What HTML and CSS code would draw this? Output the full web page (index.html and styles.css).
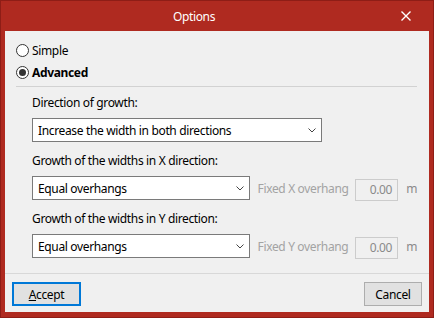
FILE: index.html
```html
<!DOCTYPE html>
<html lang="en">
<head>
  <meta charset="UTF-8" />
  <title>Options</title>
  <link rel="stylesheet" href="styles.css">
</head>
<body>

  <div class="window">
    <div class="titlebar">
      <span class="title">Options</span>
      <span class="close">
        <svg width="10" height="10" viewBox="0 0 10 10"><path d="M0.5 0.5 L9.5 9.5 M9.5 0.5 L0.5 9.5" stroke="#fff" stroke-width="1.4" fill="none"/></svg>
      </span>
    </div>

    <div class="content">
      <div class="body">
        <div class="radio"><span class="radio-dot"></span>Simple</div>
        <div class="radio checked"><span class="radio-dot"></span><b>Advanced</b></div>
        <div class="divider"></div>

        <div class="group">
          <div class="field-label">Direction of growth:</div>
          <div class="select wide">
            <span>Increase the width in both directions</span>
            <svg width="8" height="5" viewBox="0 0 8 5"><path d="M0.5 0.5 L4 4 L7.5 0.5" stroke="#444" fill="none"/></svg>
          </div>

          <div class="field-label">Growth of the widths in X direction:</div>
          <div class="row">
            <div class="select">
              <span>Equal overhangs</span>
              <svg width="8" height="5" viewBox="0 0 8 5"><path d="M0.5 0.5 L4 4 L7.5 0.5" stroke="#444" fill="none"/></svg>
            </div>
            <span class="muted">Fixed X overhang</span>
            <span class="number">0.00</span>
            <span class="unit">m</span>
          </div>

          <div class="field-label">Growth of the widths in Y direction:</div>
          <div class="row">
            <div class="select">
              <span>Equal overhangs</span>
              <svg width="8" height="5" viewBox="0 0 8 5"><path d="M0.5 0.5 L4 4 L7.5 0.5" stroke="#444" fill="none"/></svg>
            </div>
            <span class="muted">Fixed Y overhang</span>
            <span class="number">0.00</span>
            <span class="unit">m</span>
          </div>
        </div>
      </div>

      <div class="footer">
        <button class="btn default"><u>A</u>ccept</button>
        <button class="btn">Cancel</button>
      </div>
    </div>
  </div>

</body>
</html>
```

FILE: styles.css
```css
body {
  margin: 0;
  padding: 0;
  font-family: 'Noto Sans', sans-serif;
  font-size: 12px;
  letter-spacing: -0.35px;
  color: #000;
}

.window {
  width: 434px;
  height: 318px;
  box-sizing: border-box;
  border: 1px solid #8e1d16;
  background-color: #af2a20;
  padding: 0 4px 5px;
  display: flex;
  flex-direction: column;
}

.titlebar {
  height: 30px;
  display: flex;
  align-items: center;
  color: #ffffff;
}

.title {
  flex: 1;
  text-align: center;
}

.close {
  width: 46px;
  display: flex;
  justify-content: center;
  align-items: center;
}

.content {
  flex: 1;
  background-color: #f0f0f0;
  display: flex;
  flex-direction: column;
}

.body {
  flex: 1;
  padding: 8px 12px 0 11px;
}

.radio {
  display: flex;
  align-items: center;
  height: 22px;
  gap: 3px;
}

.radio-dot {
  width: 13px;
  height: 13px;
  box-sizing: border-box;
  border: 1px solid #333;
  border-radius: 50%;
  background-color: #fff;
  display: flex;
  justify-content: center;
  align-items: center;
}

.radio.checked .radio-dot::after {
  content: "";
  width: 7px;
  height: 7px;
  border-radius: 50%;
  background-color: #333;
}

.divider {
  height: 1px;
  background-color: #d2d2d2;
  margin-top: 3px;
}

.group {
  padding: 7px 0 0 16px;
}

.field-label {
  line-height: 18px;
  margin-bottom: 6px;
}

.select {
  width: 220px;
  height: 24px;
  box-sizing: border-box;
  border: 1px solid #7a7a7a;
  background-color: #fff;
  padding: 0 5px 0 5px;
  display: flex;
  justify-content: space-between;
  align-items: center;
  margin-bottom: 10px;
  white-space: nowrap;
}

.select.wide {
  width: 290px;
}

.row {
  display: flex;
  align-items: flex-start;
}

.muted,
.number,
.unit {
  margin-top: 3px;
  line-height: 20px;
  white-space: nowrap;
}

.muted {
  width: 89px;
  margin-left: 8px;
  color: #a3a3a3;
}

.number {
  width: 44px;
  height: 22px;
  box-sizing: border-box;
  margin-left: 8px;
  border: 1px solid #cccccc;
  text-align: right;
  padding-right: 5px;
  color: #8a8a8a;
}

.unit {
  margin-left: 8px;
  color: #8a8a8a;
}

.footer {
  border-top: 1px solid #d8d8d8;
  padding: 8px 7px 6px;
  display: flex;
  justify-content: space-between;
}

.btn {
  height: 24px;
  box-sizing: border-box;
  font-family: 'Noto Sans', sans-serif;
  font-size: 12px;
  letter-spacing: -0.35px;
  color: #000;
  background-color: #e1e1e1;
  border: 1px solid #adadad;
  padding: 0;
  width: 58px;
}

.btn.default {
  width: 69px;
  border: 2px solid #0078d7;
}
```
